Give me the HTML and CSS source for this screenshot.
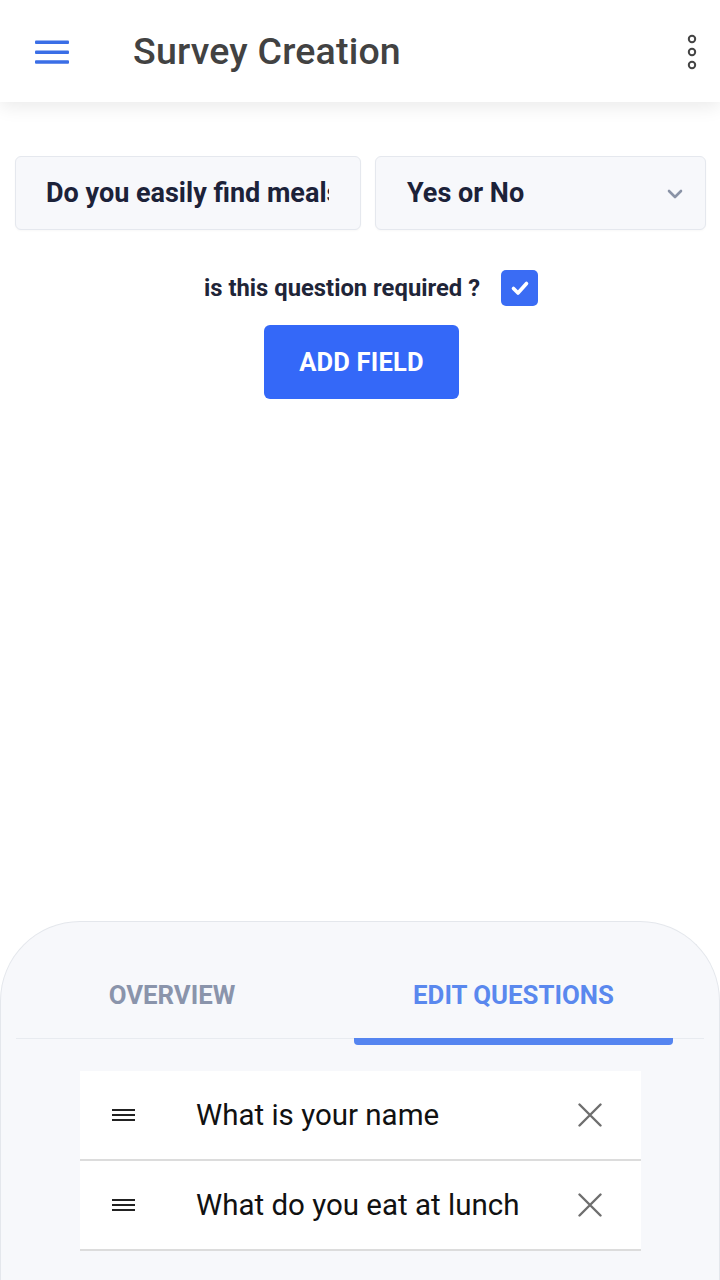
FILE: index.html
```html
<!DOCTYPE html>
<html lang="en">
<head>
<meta charset="utf-8">
<title>Survey Creation</title>
<link rel="stylesheet" href="styles.css">
</head>
<body>
<div class="page">
  <header class="appbar">
    <button class="icon-btn menu" aria-label="Menu">
      <svg width="34" height="24" viewBox="0 0 34 24"><rect x="0" y="0.5" width="34" height="3.6" rx="1" fill="#3a6ee6"/><rect x="0" y="10.5" width="34" height="3.6" rx="1" fill="#3a6ee6"/><rect x="0" y="20.2" width="34" height="3.6" rx="1" fill="#3a6ee6"/></svg>
    </button>
    <h1 class="title">Survey Creation</h1>
    <button class="icon-btn more" aria-label="More">
      <svg width="12" height="36" viewBox="0 0 12 36"><circle cx="6" cy="5" r="3.2" fill="none" stroke="#444" stroke-width="2"/><circle cx="6" cy="18" r="3.2" fill="none" stroke="#444" stroke-width="2"/><circle cx="6" cy="31" r="3.2" fill="none" stroke="#444" stroke-width="2"/></svg>
    </button>
  </header>

  <main class="content">
    <div class="field-row">
      <input class="field input" type="text" value="Do you easily find meals in your area?">
      <div class="field select">
        <span>Yes or No</span>
        <svg width="18" height="12" viewBox="0 0 18 12"><path d="M3 3l6 6 6-6" fill="none" stroke="#8a93a6" stroke-width="2.6" stroke-linecap="round" stroke-linejoin="round"/></svg>
      </div>
    </div>
    <label class="required">
      <span>is this question required ?</span>
      <span class="checkbox">
        <svg width="20" height="16" viewBox="0 0 20 16"><path d="M3.5 8.5l4.5 4.5L16.5 3.5" fill="none" stroke="#fff" stroke-width="3.6" stroke-linecap="round" stroke-linejoin="round"/></svg>
      </span>
    </label>
    <div class="actions">
      <button class="add-btn">ADD FIELD</button>
    </div>
  </main>

  <section class="sheet">
    <nav class="tabs">
      <div class="tab">OVERVIEW</div>
      <div class="tab active">EDIT QUESTIONS</div>
    </nav>
    <ul class="questions">
      <li class="question">
        <svg class="drag" width="23" height="14" viewBox="0 0 23 14"><rect y="1" width="23" height="2" fill="#222"/><rect y="6" width="23" height="2" fill="#222"/><rect y="11" width="23" height="2" fill="#222"/></svg>
        <span class="q-text">What is your name</span>
        <svg class="close" width="24" height="24" viewBox="0 0 24 24"><path d="M1.5 1.5l21 21M22.5 1.5l-21 21" stroke="#6e6e6e" stroke-width="2.4" stroke-linecap="round"/></svg>
      </li>
      <li class="question">
        <svg class="drag" width="23" height="14" viewBox="0 0 23 14"><rect y="1" width="23" height="2" fill="#222"/><rect y="6" width="23" height="2" fill="#222"/><rect y="11" width="23" height="2" fill="#222"/></svg>
        <span class="q-text">What do you eat at lunch</span>
        <svg class="close" width="24" height="24" viewBox="0 0 24 24"><path d="M1.5 1.5l21 21M22.5 1.5l-21 21" stroke="#6e6e6e" stroke-width="2.4" stroke-linecap="round"/></svg>
      </li>
    </ul>
  </section>
</div>
</body>
</html>
```

FILE: styles.css
```css
* { box-sizing: border-box; }
html, body { margin: 0; padding: 0; }
body {
  background: #fff;
  font-family: Roboto, "Liberation Sans", Arial, sans-serif;
  overflow: hidden;
}
.page {
  height: 1280px;
  display: flex;
  flex-direction: column;
}
.appbar {
  height: 102px;
  flex: none;
  display: flex;
  align-items: center;
  background: #fff;
  box-shadow: 0 4px 18px rgba(0, 0, 0, 0.09);
  position: relative;
  z-index: 1;
}
.icon-btn {
  background: none;
  border: 0;
  padding: 0;
  display: flex;
  align-items: center;
  justify-content: center;
  cursor: pointer;
}
.menu { margin-left: 35px; width: 34px; height: 24px; margin-top: 2px; }
.title {
  margin: 0 0 0 64px;
  font-size: 37.5px;
  font-weight: 500;
  color: #424242;
  flex: 1;
  letter-spacing: 0.2px;
}
.more { margin-right: 22px; margin-top: 2px; }

.content {
  flex: 1;
  padding: 54px 14px 0 15px;
}
.field-row {
  display: grid;
  grid-template-columns: 346px 1fr;
  column-gap: 14px;
}
.field {
  height: 74px;
  background: #f7f8fb;
  border: 1px solid #e5e8ee;
  border-radius: 6px;
  font-family: Roboto, "Liberation Sans", Arial, sans-serif;
  font-size: 27px;
  font-weight: 700;
  color: #1c2239;
  box-shadow: 0 1px 2px rgba(0, 0, 0, 0.03);
}
.input {
  width: 100%;
  padding: 0 31px 0 30px;
  outline: none;
}
.select {
  display: flex;
  align-items: center;
  justify-content: space-between;
  padding: 0 21px 0 31px;
}
.select svg { margin-top: 2px; }

.required {
  margin-top: 40px;
  display: flex;
  align-items: center;
  justify-content: center;
  gap: 21px;
  padding-left: 21px;
  font-size: 23.8px;
  font-weight: 700;
  color: #1f2538;
}
.checkbox {
  width: 37px;
  height: 36px;
  border-radius: 5px;
  background: #3a6cf4;
  display: flex;
  align-items: center;
  justify-content: center;
}
.actions {
  display: flex;
  justify-content: center;
  margin-top: 19px;
  padding-left: 2px;
}
.add-btn {
  width: 195px;
  height: 74px;
  border: 0;
  border-radius: 6px;
  background: #3468f8;
  color: #fff;
  font-family: Roboto, "Liberation Sans", Arial, sans-serif;
  font-size: 25.5px;
  font-weight: 700;
  letter-spacing: 0.2px;
}

.sheet {
  flex: none;
  height: 359px;
  background: #f7f8fb;
  border: 1px solid #e4e7ec;
  border-bottom: 0;
  border-radius: 80px 80px 0 0;
}
.tabs {
  margin: 0 15px;
  display: grid;
  grid-template-columns: 312px 319px;
  column-gap: 26px;
  border-bottom: 1px solid #e8ebf0;
  height: 117px;
  align-items: end;
}
.tab {
  text-align: center;
  font-size: 25.8px;
  font-weight: 700;
  color: #8a94ab;
  padding-bottom: 36px;
  height: 120px;
  display: flex;
  align-items: flex-end;
  justify-content: center;
  position: relative;
  top: 3px;
  line-height: 1;
}
.tab.active {
  color: #5a88ee;
  border-bottom: 7px solid #5585f0;
  border-radius: 4px;
  padding-bottom: 29px;
}
.questions {
  list-style: none;
  margin: 32px 78px 0 79px;
  padding: 0;
}
.question {
  height: 90px;
  background: #fff;
  border-bottom: 2px solid #dcdcdc;
  display: flex;
  align-items: center;
  padding-left: 32px;
}
.drag { flex: none; }
.q-text {
  margin-left: 61px;
  flex: 1;
  font-size: 29.5px;
  color: #111;
}
.close { flex: none; margin-right: 39px; }
```
